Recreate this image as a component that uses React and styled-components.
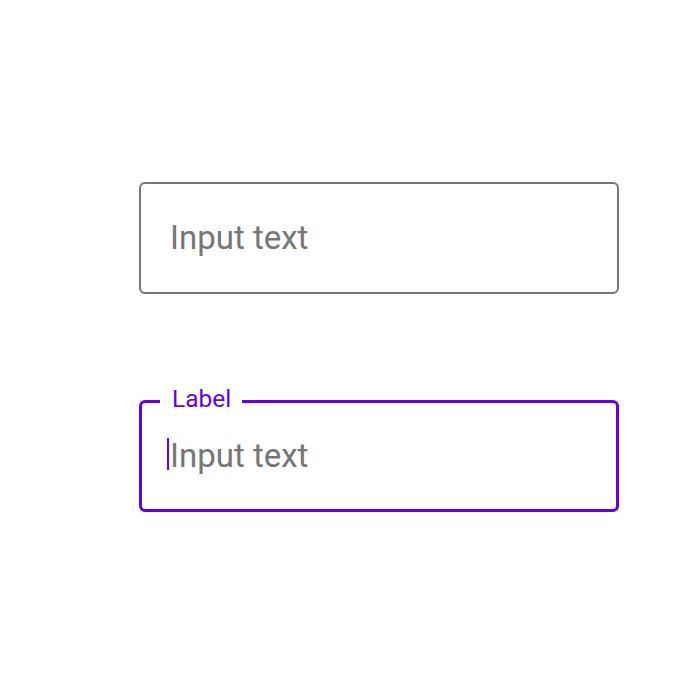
import React from "react";
import styled, { createGlobalStyle } from "styled-components";

const Global = createGlobalStyle`
  body {
    margin: 0;
    background: #ffffff;
    font-family: Roboto, "Liberation Sans", sans-serif;
  }
`;

const Page = styled.div`
  display: flex;
  flex-direction: column;
  gap: 106px;
  padding: 182px 0 0 139px;
`;

const Field = styled.div`
  position: relative;
  box-sizing: border-box;
  width: 480px;
  height: 112px;
  display: flex;
  align-items: center;
  padding-left: ${(props) => (props.focused ? "28px" : "29px")};
  border: ${(props) => (props.focused ? "3px solid #6200ee" : "2px solid #767676")};
  border-radius: 6px;
`;

const Label = styled.span`
  position: absolute;
  top: -19px;
  left: 18px;
  padding: 0 11px 0 12px;
  background: #ffffff;
  color: #6200ee;
  font-size: 24.5px;
  line-height: 30px;
`;

const Value = styled.span`
  position: relative;
  color: #767676;
  font-size: 33px;
  line-height: 36px;
`;

const Caret = styled.span`
  position: absolute;
  left: -3px;
  top: 0;
  width: 2px;
  height: 32px;
  background: #6200ee;
`;

export default function App() {
  return (
    <>
      <Global />
      <Page>
        <Field>
          <Value>Input text</Value>
        </Field>
        <Field focused>
          <Label>Label</Label>
          <Value>
            <Caret />
            Input text
          </Value>
        </Field>
      </Page>
    </>
  );
}
